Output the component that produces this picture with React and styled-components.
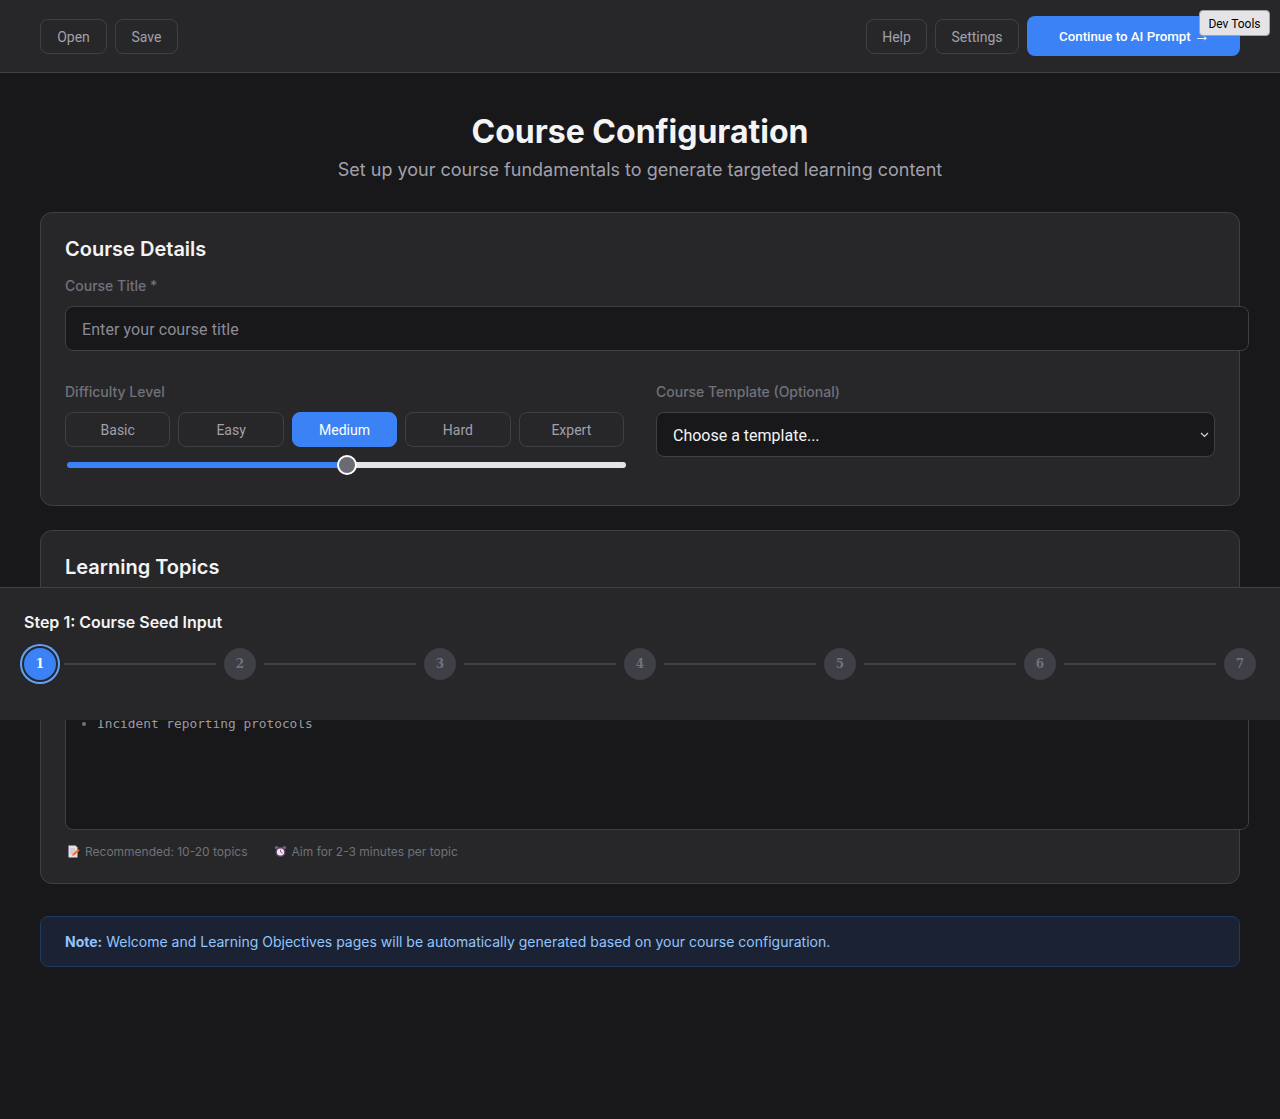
import React from 'react';
import styled, { createGlobalStyle } from 'styled-components';

const GlobalStyle = createGlobalStyle`
  html, body {
    margin: 0;
    padding: 0;
    background: #18181b;
  }
  body {
    font-family: Inter, "Liberation Sans", sans-serif;
    color: #f4f4f5;
  }
`;

const controlFont = 'Roboto, "Liberation Sans", sans-serif';

const chevron = `url("data:image/svg+xml,%3Csvg xmlns='http://www.w3.org/2000/svg' width='9' height='6' viewBox='0 0 9 6'%3E%3Cpath d='M1 1l3.5 3.5L8 1' fill='none' stroke='%23d4d4d8' stroke-width='1.2'/%3E%3C/svg%3E")`;

const Page = styled.div`
  position: relative;
  min-height: 1119px;
  overflow: hidden;
`;

const Header = styled.header`
  display: flex;
  justify-content: space-between;
  align-items: center;
  height: 72px;
  padding: 0 40px;
  background: #27272a;
  border-bottom: 1px solid #3f3f46;
`;

const ButtonGroup = styled.div`
  display: flex;
  align-items: center;
  gap: 8px;
`;

const GhostButton = styled.button`
  width: ${p => p.$width}px;
  height: 35px;
  padding: 1px 0 0;
  background: transparent;
  border: 1px solid #3f3f46;
  border-radius: 8px;
  color: #a1a1aa;
  font-family: ${controlFont};
  font-size: 14px;
`;

const PrimaryButton = styled.button`
  width: 213px;
  height: 40px;
  padding: 0 0 0 32px;
  background: #3b82f6;
  border: none;
  border-radius: 8px;
  color: #fff;
  font-family: ${controlFont};
  font-size: 13.3px;
  font-weight: 500;
  text-align: left;
  white-space: nowrap;
`;

const Arrow = styled.span`
  font-family: "Liberation Sans", sans-serif;
  font-size: 16px;
  line-height: 1;
  font-weight: 400;
`;

const DevToolsButton = styled.button`
  position: absolute;
  top: 10px;
  right: 10px;
  width: 71px;
  height: 26px;
  padding: 2px 0 0;
  background: #e4e4e7;
  border: 1px solid #a1a1aa;
  border-radius: 4px;
  color: #000;
  font-family: ${controlFont};
  font-size: 12px;
`;

const Main = styled.main`
  padding: 39px 40px 0;
`;

const Title = styled.h1`
  margin: 0;
  text-align: center;
  font-size: 32px;
  line-height: 39px;
  font-weight: 700;
  color: #f4f4f5;
`;

const Subtitle = styled.p`
  margin: 8px 0 31px;
  text-align: center;
  font-size: 18px;
  line-height: 22px;
  color: #a1a1aa;
`;

const Card = styled.section`
  margin-bottom: 24px;
  padding: 24px;
  background: #27272a;
  border: 1px solid #3f3f46;
  border-radius: 12px;
`;

const CardTitle = styled.h2`
  margin: 0 0 16px;
  font-size: 20px;
  line-height: 24px;
  font-weight: 600;
  color: #f4f4f5;
`;

const Label = styled.label`
  display: block;
  margin-bottom: 12px;
  font-size: 14px;
  line-height: 17px;
  font-weight: 500;
  color: #71717a;
`;

const TextInput = styled.input`
  display: block;
  box-sizing: content-box;
  width: 100%;
  height: 19px;
  padding: 13px 16px 11px;
  margin-bottom: 32px;
  background: #18181b;
  border: 1px solid #3f3f46;
  border-radius: 8px;
  color: #f4f4f5;
  font-family: ${controlFont};
  font-size: 16px;
  letter-spacing: 0.08px;
  &::placeholder {
    color: #8b8b93;
  }
`;

const Columns = styled.div`
  display: grid;
  grid-template-columns: 1fr 1fr;
  gap: 32px;
  padding-bottom: 13px;
`;

const LevelRow = styled.div`
  display: flex;
  gap: 8px;
`;

const LevelButton = styled.button`
  flex: 1;
  height: 35px;
  padding: 0;
  background: ${p => (p.$active ? '#3b82f6' : 'transparent')};
  border: 1px solid ${p => (p.$active ? '#3b82f6' : '#3f3f46')};
  border-radius: 8px;
  color: ${p => (p.$active ? '#fff' : '#a1a1aa')};
  font-family: ${controlFont};
  font-size: 14px;
`;

const Slider = styled.input`
  -webkit-appearance: none;
  appearance: none;
  display: block;
  width: 100%;
  height: 6px;
  margin: 15px 0 0 2px;
  border-radius: 3px;
  background: linear-gradient(
    to right,
    #3b82f6 ${p => p.$percent}%,
    #e4e4e7 ${p => p.$percent}%
  );
  &::-webkit-slider-thumb {
    -webkit-appearance: none;
    box-sizing: border-box;
    width: 20px;
    height: 20px;
    border: 2px solid #fff;
    border-radius: 50%;
    background: #6b6b76;
  }
`;

const Select = styled.select`
  -webkit-appearance: none;
  appearance: none;
  display: block;
  width: 100%;
  height: 45px;
  padding: 1px 16px 0;
  background: #18181b ${chevron} no-repeat right 5px center;
  border: 1px solid #3f3f46;
  border-radius: 8px;
  color: #f4f4f5;
  font-family: ${controlFont};
  font-size: 16px;
`;

const TopicsBox = styled.div`
  box-sizing: content-box;
  width: 100%;
  height: 204px;
  margin: 45px 0 0;
  padding: 0 16px;
  background: #18181b;
  border: 1px solid #3f3f46;
  border-radius: 8px;
  overflow: hidden;
`;

const TopicsList = styled.ul`
  margin: 0;
  padding: 91px 0 0 15px;
  font-family: "DejaVu Sans Mono", monospace;
  font-size: 12.8px;
  line-height: 16px;
  color: #9a9aa2;
  li::marker {
    color: #71717a;
  }
`;

const HintRow = styled.div`
  display: flex;
  gap: 26px;
  margin-top: 14px;
  padding-left: 2px;
`;

const Hint = styled.span`
  display: flex;
  align-items: center;
  gap: 5px;
  font-size: 12px;
  line-height: 15px;
  color: #71717a;
`;

const Note = styled.div`
  margin-top: 32px;
  padding: 16px 24px;
  background: #1a2233;
  border: 1px solid #1e3a5f;
  border-radius: 8px;
  font-size: 14px;
  line-height: 17px;
  color: #93c5fd;
  strong {
    font-weight: 700;
  }
`;

const StepBar = styled.div`
  position: absolute;
  top: 587px;
  left: 0;
  right: 0;
  box-sizing: border-box;
  height: 133px;
  padding: 25px 24px 0;
  background: #27272a;
  border-top: 1px solid #3f3f46;
`;

const StepTitle = styled.div`
  margin-bottom: 16px;
  font-size: 16px;
  line-height: 19px;
  font-weight: 600;
  color: #f4f4f5;
`;

const StepTrack = styled.div`
  display: flex;
  align-items: center;
`;

const StepDot = styled.div`
  display: flex;
  flex: none;
  align-items: center;
  justify-content: center;
  width: 32px;
  height: 32px;
  border-radius: 50%;
  background: ${p => (p.$active ? '#3b82f6' : '#3f3f46')};
  box-shadow: ${p => (p.$active ? '0 0 0 2px #27272a, 0 0 0 4px #60a5fa' : 'none')};
  color: ${p => (p.$active ? '#fff' : '#71717a')};
  font-family: "DejaVu Serif", serif;
  font-size: 12px;
  font-weight: 700;
`;

const StepLine = styled.div`
  flex: 1;
  height: 2px;
  margin: 0 8px;
  background: #3f3f46;
`;

const MemoIcon = () => (
  <svg width="13" height="13" viewBox="0 0 13 13" aria-hidden="true">
    <path d="M1.5 0.5h7l2 2v10h-9z" fill="#e4e0e4" />
    <path d="M3 4h5M3 6h5M3 8h3" stroke="#b8b4bc" strokeWidth="0.8" />
    <path d="M5 11l1-2.5 5-4.5 1.6 1.6-5 4.5z" fill="#f4702a" />
  </svg>
);

const ClockIcon = () => (
  <svg width="13" height="13" viewBox="0 0 13 13" aria-hidden="true">
    <circle cx="2.6" cy="2.6" r="1.7" fill="#7a5a8c" />
    <circle cx="10.4" cy="2.6" r="1.7" fill="#7a5a8c" />
    <circle cx="6.5" cy="7" r="5" fill="#5c4a78" />
    <circle cx="6.5" cy="7" r="3.6" fill="#efe6f2" />
    <path d="M6.5 7V4.6M6.5 7l2 1" stroke="#d0453a" strokeWidth="0.9" />
  </svg>
);

const levels = ['Basic', 'Easy', 'Medium', 'Hard', 'Expert'];
const steps = [1, 2, 3, 4, 5, 6, 7];

export default function App() {
  return (
    <Page>
      <GlobalStyle />
      <Header>
        <ButtonGroup>
          <GhostButton $width={67}>Open</GhostButton>
          <GhostButton $width={63}>Save</GhostButton>
        </ButtonGroup>
        <ButtonGroup>
          <GhostButton $width={61}>Help</GhostButton>
          <GhostButton $width={84}>Settings</GhostButton>
          <PrimaryButton>Continue to AI Prompt <Arrow>→</Arrow></PrimaryButton>
        </ButtonGroup>
      </Header>
      <DevToolsButton>Dev Tools</DevToolsButton>

      <Main>
        <Title>Course Configuration</Title>
        <Subtitle>Set up your course fundamentals to generate targeted learning content</Subtitle>

        <Card>
          <CardTitle>Course Details</CardTitle>
          <Label>Course Title *</Label>
          <TextInput placeholder="Enter your course title" readOnly />
          <Columns>
            <div>
              <Label>Difficulty Level</Label>
              <LevelRow>
                {levels.map(level => (
                  <LevelButton key={level} $active={level === 'Medium'}>
                    {level}
                  </LevelButton>
                ))}
              </LevelRow>
              <Slider type="range" min="1" max="5" defaultValue="3" $percent={50} />
            </div>
            <div>
              <Label>Course Template (Optional)</Label>
              <Select>
                <option>Choose a template...</option>
              </Select>
            </div>
          </Columns>
        </Card>

        <Card>
          <CardTitle>Learning Topics</CardTitle>
          <TopicsBox>
            <TopicsList>
              <li>Incident reporting protocols</li>
            </TopicsList>
          </TopicsBox>
          <HintRow>
            <Hint>
              <MemoIcon />
              Recommended: 10-20 topics
            </Hint>
            <Hint>
              <ClockIcon />
              Aim for 2-3 minutes per topic
            </Hint>
          </HintRow>
        </Card>

        <Note>
          <strong>Note:</strong> Welcome and Learning Objectives pages will be automatically generated based on your course configuration.
        </Note>
      </Main>

      <StepBar>
        <StepTitle>Step 1: Course Seed Input</StepTitle>
        <StepTrack>
          {steps.map(step => (
            <React.Fragment key={step}>
              <StepDot $active={step === 1}>{step}</StepDot>
              {step < steps.length && <StepLine />}
            </React.Fragment>
          ))}
        </StepTrack>
      </StepBar>
    </Page>
  );
}
